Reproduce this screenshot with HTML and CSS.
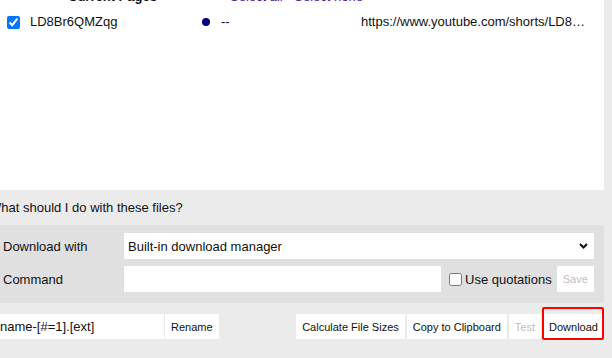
FILE: index.html
```html
<!DOCTYPE html>
<html lang="en">
<head>
    <meta charset="UTF-8">
    <meta name="viewport" content="width=device-width, initial-scale=1.0">
    <title>Download Files</title>

    <link rel="stylesheet" href="styles.css">
</head>
<body>
    <div class="list">
        <div class="list-inner">
            <div class="list-head">
                <span class="head-title">Current Pages</span>
                <span class="head-links"><a href="#">Select all</a> - <a href="#">Select none</a></span>
            </div>
            <div class="file-row">
                <input type="checkbox" checked>
                <span>LD8Br6QMZqg</span>
                <span class="dot"></span>
                <span>--</span>
                <span class="url">https://www.youtube.com/shorts/LD8Br6QMZqg</span>
            </div>
        </div>
    </div>

    <h2 class="question">What should I do with these files?</h2>

    <div class="options">
        <label class="opt-label">Download with</label>
        <div class="select-wrap">
            <select>
                <option>Built-in download manager</option>
            </select>
            <svg class="chevron" width="9" height="6" viewBox="0 0 9 6">
                <path d="M1 1 L4.5 4.5 L8 1" fill="none" stroke="#111" stroke-width="2"/>
            </svg>
        </div>
        <label class="opt-label">Command</label>
        <div class="command">
            <input type="text" class="field">
            <label class="quote"><input type="checkbox">Use quotations</label>
            <button class="btn save" disabled>Save</button>
        </div>
    </div>

    <div class="actions">
        <input type="text" class="field rename-field" value="name-[#=1].[ext]">
        <button class="btn">Rename</button>
        <div class="right-btns">
            <button class="btn">Calculate File Sizes</button>
            <button class="btn">Copy to Clipboard</button>
            <button class="btn" disabled>Test</button>
            <button class="btn download">Download</button>
        </div>
    </div>
</body>
</html>
```

FILE: styles.css
```css
* {
    margin: 0;
    padding: 0;
    box-sizing: border-box;
}
body {
    background-color: #ebebeb;
    font-family: "Liberation Sans", Arial, sans-serif;
    font-size: 13px;
    color: #111;
    width: 612px;
    height: 358px;
    overflow: hidden;
}
.list {
    background-color: #fff;
    width: 604px;
    height: 190px;
    overflow: hidden;
}
.list-inner {
    margin-top: -11px;
}
.list-head {
    height: 16px;
    line-height: 16px;
    display: flex;
}
.head-title {
    font-weight: bold;
    margin-left: 68px;
    width: 162px;
}
.head-links a {
    color: #551a8b;
    text-decoration: none;
}
.file-row {
    margin-top: 7px;
    height: 20px;
    line-height: 20px;
    display: grid;
    grid-template-columns: 23px 172px 19px 140px 1fr;
    align-items: center;
    padding: 0 12px 0 7px;
}
.file-row input {
    width: 13px;
    height: 13px;
    margin: 0;
}
.dot {
    width: 8px;
    height: 8px;
    border-radius: 50%;
    background-color: #000080;
}
.url {
    white-space: nowrap;
    overflow: hidden;
    text-overflow: ellipsis;
}
.question {
    font-size: 13px;
    font-weight: normal;
    line-height: 35px;
    margin-left: -11px;
}
.options {
    background-color: #e0e0e0;
    width: 604px;
    padding: 8px 10px 11px 3px;
    display: grid;
    grid-template-columns: 121px 1fr;
    row-gap: 7px;
    align-items: center;
}
.select-wrap {
    position: relative;
}
select {
    appearance: none;
    width: 100%;
    height: 26px;
    border: none;
    background-color: #fff;
    font-family: inherit;
    font-size: 13px;
    color: #111;
    padding: 0 4px;
}
.chevron {
    position: absolute;
    right: 6px;
    top: 10px;
    pointer-events: none;
}
.field {
    height: 26px;
    border: none;
    background-color: #fff;
    font-family: inherit;
    font-size: 13px;
    color: #111;
    padding: 0 4px;
}
.command {
    display: flex;
    align-items: center;
}
.command .field {
    width: 317px;
}
.quote {
    display: flex;
    align-items: center;
    margin-left: 8px;
    gap: 3px;
}
.quote input {
    width: 13px;
    height: 13px;
    margin: 0;
}
.btn {
    height: 26px;
    border: none;
    background-color: #fff;
    font-family: inherit;
    font-size: 11px;
    color: #111;
    padding: 0 6px;
}
.btn:disabled {
    color: #c0c0c0;
}
.save {
    margin-left: 5px;
    width: 37px;
    font-size: 11px;
}
.actions {
    margin-top: 11px;
    width: 604px;
    display: flex;
    align-items: center;
}
.actions .btn, .actions .field {
    height: 25px;
}
.rename-field {
    width: 164px;
    padding: 0;
    margin-right: 1px;
}
.right-btns {
    margin-left: auto;
    display: flex;
    gap: 2px;
}
.download {
    position: relative;
    width: 61px;
}
.download::after {
    content: "";
    position: absolute;
    top: -7px;
    left: -1px;
    right: 0;
    bottom: -1px;
    border: 2px solid #f00;
    border-radius: 2px;
}
```
